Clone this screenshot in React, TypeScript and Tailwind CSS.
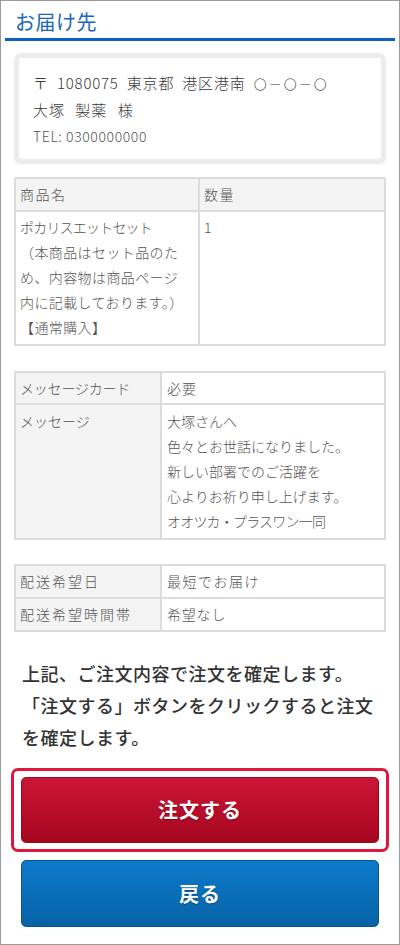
import React from "react";

const font = { fontFamily: '"Noto Sans CJK JP", "Noto Sans", sans-serif' };

export default function App() {
  return (
    <div
      className="w-[400px] h-[945px] border border-[#9a9a9a] bg-white overflow-hidden text-[#444]"
      style={font}
    >
      {/* Title */}
      <div className="mx-[4px] border-b-[3px] border-[#0b60bd] pl-[10px] pt-[8px] pb-[4px] h-[40px]">
        <h1 className="text-[20px] leading-[26px] text-[#1b66b8] font-normal tracking-[0.5px]">お届け先</h1>
      </div>

      <div className="px-[13px]">
        {/* Address */}
        <div className="mt-[12px] border-[5px] border-[#ececec] rounded-[7px] h-[111px] pl-[14px] pt-[12px] font-light">
          <p className="text-[15px] leading-[26px] text-[#3a3a3a] tracking-[0.8px] [word-spacing:4px]">
            〒 1080075 東京都 港区港南 <span className="text-[13px] tracking-[2px]">〇－〇－〇</span>
          </p>
          <p className="text-[15px] leading-[26px] text-[#3a3a3a] tracking-[1px] [word-spacing:6px]">大塚 製薬 様</p>
          <p className="text-[14px] leading-[26px] text-[#555] tracking-[0.6px]">TEL: 0300000000</p>
        </div>

        {/* Table 1 */}
        <div className="mt-[13px] border-2 border-[#dcdcdc] text-[14px] text-[#555] font-light">
          <div className="flex h-[33px] border-b-2 border-[#dcdcdc] bg-[#f4f4f4] tracking-[1.5px]">
            <div className="w-[184px] border-r-2 border-[#dcdcdc] pl-[4px] flex items-center">商品名</div>
            <div className="flex-1 pl-[4px] flex items-center">数量</div>
          </div>
          <div className="flex">
            <div className="w-[184px] border-r-2 border-[#dcdcdc] pl-[4px] pt-[3px] pb-[4px] leading-[25px] tracking-[0.4px]">
              <span className="tracking-[-0.8px]">ポカリスエットセット</span><br />
              （本商品はセット品のた<br />
              め、内容物は商品ページ<br />
              内に記載しております。）<br />
              【通常購入】
            </div>
            <div className="flex-1 pl-[4px] pt-[3px] leading-[25px]">1</div>
          </div>
        </div>

        {/* Table 2 */}
        <div className="mt-[25px] border-2 border-[#dcdcdc] text-[14px] text-[#555] font-light">
          <div className="flex h-[32px] border-b-2 border-[#dcdcdc]">
            <div className="w-[146px] border-r-2 border-[#dcdcdc] bg-[#f4f4f4] pl-[4px] flex items-center tracking-[-0.2px]">メッセージカード</div>
            <div className="flex-1 pl-[5px] flex items-center tracking-[1px]">必要</div>
          </div>
          <div className="flex">
            <div className="w-[146px] border-r-2 border-[#dcdcdc] bg-[#f4f4f4] pl-[4px] pt-[4px] leading-[25px]">メッセージ</div>
            <div className="flex-1 pl-[5px] pt-[4px] pb-[4px] leading-[25px]">
              大塚さんへ<br />
              色々とお世話になりました。<br />
              新しい部署でのご活躍を<br />
              心よりお祈り申し上げます。<br />
              <span className="tracking-[-0.8px]">オオツカ・プラスワン一同</span>
            </div>
          </div>
        </div>

        {/* Table 3 */}
        <div className="mt-[24px] border-2 border-[#dcdcdc] text-[14px] text-[#555] font-light">
          <div className="flex h-[33px] border-b-2 border-[#dcdcdc]">
            <div className="w-[146px] border-r-2 border-[#dcdcdc] bg-[#f4f4f4] pl-[4px] flex items-center tracking-[2px]">配送希望日</div>
            <div className="flex-1 pl-[5px] flex items-center tracking-[1.5px]">最短でお届け</div>
          </div>
          <div className="flex h-[31px]">
            <div className="w-[146px] border-r-2 border-[#dcdcdc] bg-[#f4f4f4] pl-[4px] flex items-center tracking-[2px]">配送希望時間帯</div>
            <div className="flex-1 pl-[5px] flex items-center tracking-[0.8px]">希望なし</div>
          </div>
        </div>

        {/* Paragraph */}
        <p className="mt-[25px] ml-[8px] text-[18px] leading-[32px] font-medium text-[#333] tracking-[0.5px]">
          上記、ご注文内容で注文を確定します。<br />
          「注文する」ボタンをクリックすると注文<br />
          を確定します。
        </p>

        {/* Order button with focus ring */}
        <div className="mt-[15px] -mx-[3px] border-[3px] border-[#e0163c] rounded-[7px] px-[7px] py-[6px]">
          <button className="w-full h-[66px] rounded-[5px] border border-[#8e0a1f] bg-gradient-to-b from-[#cd1536] to-[#a5061f] text-white text-[20px] font-bold tracking-[1px] [text-shadow:0_1px_1px_rgba(0,0,0,0.3)]">
            注文する
          </button>
        </div>

        {/* Back button */}
        <div className="mt-[8px] mx-[7px]">
          <button className="w-full h-[67px] rounded-[5px] border border-[#0a558f] bg-gradient-to-b from-[#0b7bcb] to-[#0862a6] text-white text-[20px] font-bold tracking-[1px] [text-shadow:0_1px_1px_rgba(0,0,0,0.3)]">
            戻る
          </button>
        </div>
      </div>
    </div>
  );
}
